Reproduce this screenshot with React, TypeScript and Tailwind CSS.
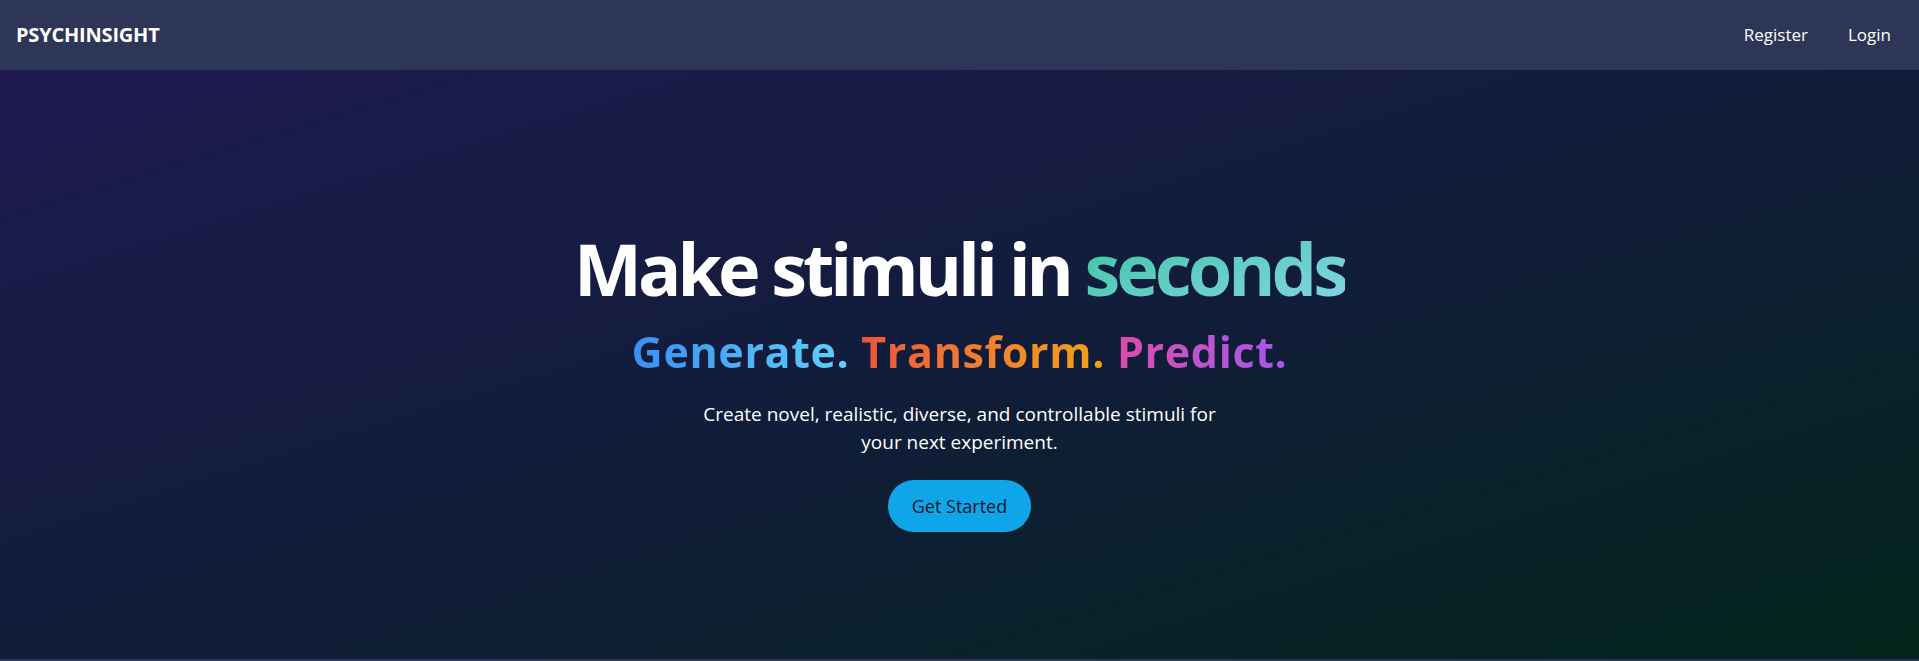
import React from 'react';

export default function App() {
  return (
    <div className="min-h-screen bg-[#2d3656] text-white font-['Open_Sans','Noto_Sans',sans-serif]">
      <nav className="h-[70px] bg-[#2d3656] flex items-center justify-between px-4">
        <a href="#" className="text-xl font-bold text-white tracking-[-0.01em]">
          PSYCHINSIGHT
        </a>
        <div className="flex items-center gap-4">
          <a href="#" className="px-3 text-[17px] text-white">Register</a>
          <a href="#" className="px-3 text-[17px] text-white">Login</a>
        </div>
      </nav>

      <section className="h-[589px] bg-gradient-to-br from-[#1e1a50] via-[#111c3a] to-[#03241a] flex flex-col items-center pt-[162px]">
        <h1 className="text-[72px] leading-none font-bold tracking-[-0.056em] text-white">
          Make stimuli in{' '}
          <span className="bg-gradient-to-br from-[#2ec39c] to-[#86d6ea] bg-clip-text text-transparent">
            seconds
          </span>
        </h1>
        <h2 className="mt-6 text-[43px] leading-[48px] font-bold tracking-[0.015em]">
          <span className="bg-gradient-to-r from-[#3b8ef2] to-[#5fd2f7] bg-clip-text text-transparent">Generate.</span>{' '}
          <span className="bg-gradient-to-r from-[#ee553a] to-[#f0a30f] bg-clip-text text-transparent">Transform.</span>{' '}
          <span className="bg-gradient-to-r from-[#d94bab] to-[#a455ee] bg-clip-text text-transparent">Predict.</span>
        </h2>
        <p className="mt-6 max-w-[530px] text-center text-[19px] leading-7 text-white">
          Create novel, realistic, diverse, and controllable stimuli for your next experiment.
        </p>
        <button className="mt-6 rounded-full bg-[#0ea5e9] px-6 py-3 text-lg leading-7 text-slate-900">
          Get Started
        </button>
      </section>
      <footer className="h-[20px] bg-[#2d3656]" />
    </div>
  );
}
